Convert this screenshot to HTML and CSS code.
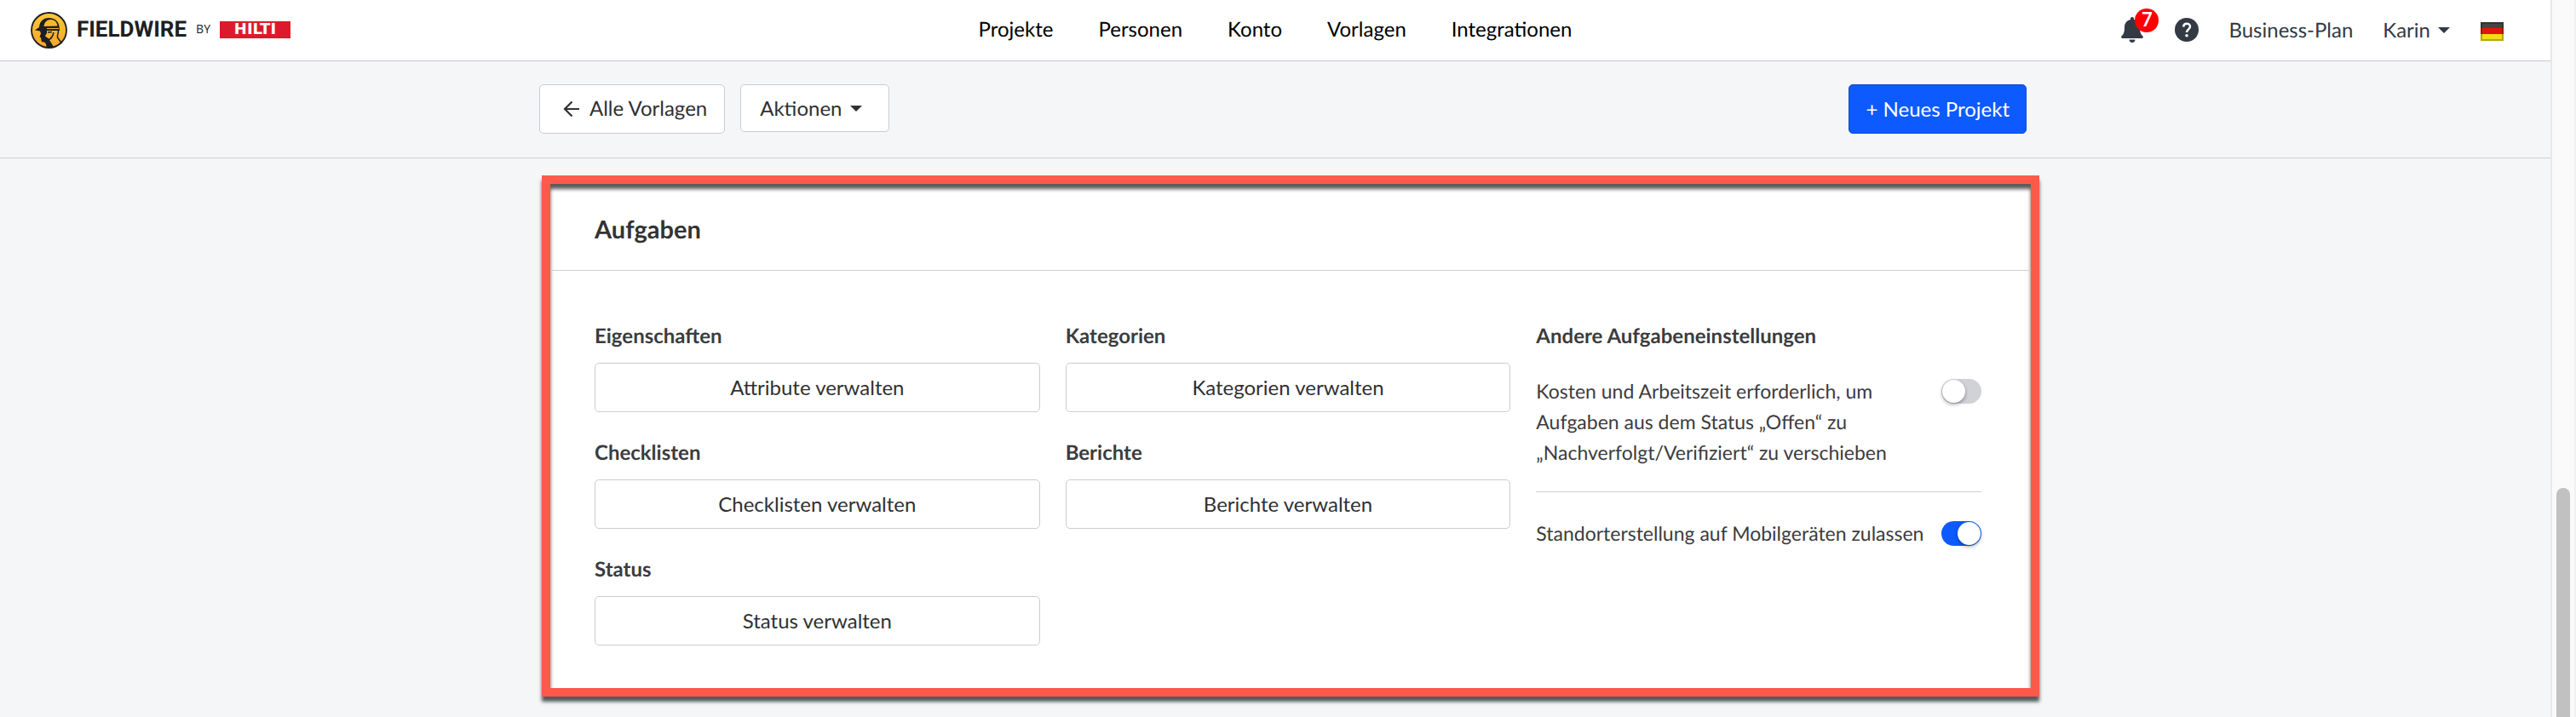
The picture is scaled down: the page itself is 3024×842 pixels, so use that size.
FILE: index.html
```html
<!DOCTYPE html>
<html lang="de">
<head>
<meta charset="utf-8">
<title>Fieldwire – Vorlagen</title>
<link rel="stylesheet" href="styles.css">
</head>
<body>
<div class="page">
  <header class="topbar">
    <a class="brand" href="#">
      <svg class="brand-mark" viewBox="0 0 43 43" aria-hidden="true">
        <defs><linearGradient id="amber" x1="0" y1="0" x2="0" y2="1"><stop offset="0" stop-color="#fdc835"/><stop offset="1" stop-color="#f9a52b"/></linearGradient></defs>
        <circle cx="21.500" cy="21.500" r="20.500" fill="url(#amber)" stroke="#1d1f23" stroke-width="1.800"/>
        <path fill="#1d1f23" d="M5 21.500 10 18C10.500 11 15 7 21 7c7 0 12 4 12.500 10L34 22H19v3l-2 3c1 2 4 2 5 5l5 8c-3 1-6 1.300-9 .800 1-3 0-5-2.500-6.500-2 .500-3-.500-3-2l-.500-3-1.500-1 1.500-4-1-2.800z"/>
        <path fill="#fbb62f" d="M15.500 17c.5-5 3.500-8 8-8s7.500 3 8 7.500z"/>
        <path stroke="#fbb62f" stroke-width="1" d="M19 19.500h14"/>
        <path fill="none" stroke="#1d1f23" stroke-width="1.500" d="M32.500 21.500c0 4-1.500 6-1 8.500l5 7M20 24l5-.500M20 33c4-1 6-4 7-9"/>
      </svg>
      <span class="brand-name">FIELDWIRE</span>
      <span class="brand-by">BY</span>
      <span class="brand-owner">HILTI</span>
    </a>
    <nav class="nav">
      <a href="#">Projekte</a>
      <a href="#">Personen</a>
      <a href="#">Konto</a>
      <a href="#">Vorlagen</a>
      <a href="#">Integrationen</a>
    </nav>
    <div class="account">
      <button class="icon-button bell" type="button" aria-label="Benachrichtigungen">
        <svg width="26" height="30" viewBox="0 0 26 30" aria-hidden="true"><path fill="#343a44" d="M13 0c1.200 0 2 .8 2 2v1c4.500 1 7 4.500 7 9 0 6 1 8 3.500 10.500.8.900.4 2.500-1 2.500h-23c-1.400 0-1.800-1.600-1-2.500C3 20 4 18 4 12c0-4.500 2.500-8 7-9V2c0-1.200.8-2 2-2zM9.500 26.500h7c0 2-1.500 3.500-3.500 3.500s-3.500-1.500-3.500-3.500z"/></svg>
        <span class="badge">7</span>
      </button>
      <button class="icon-button help" type="button" aria-label="Hilfe">
        <svg width="28" height="28" viewBox="0 0 28 28" aria-hidden="true"><circle cx="14" cy="14" r="14" fill="#343a44"/><path fill="none" stroke="#fff" stroke-width="2.500" d="M10 10.500c.3-2.300 1.800-3.700 4-3.700s4 1.400 4 3.500c0 3-4 3.200-4 6.700"/><circle cx="14" cy="20.700" r="1.800" fill="#fff"/></svg>
      </button>
      <span class="plan">Business-Plan</span>
      <button class="user" type="button">Karin <span class="caret"></span></button>
      <button class="icon-button language" type="button" aria-label="Deutsch">
        <svg width="27" height="22" viewBox="0 0 27 22" aria-hidden="true"><path fill="#444" d="M0 0h27v8H0z"/><path fill="#e2140f" d="M0 7h27v7H0z"/><path fill="#f5dc14" d="M0 14h27v8H0z"/><path fill="none" stroke="#000" stroke-opacity=".25" stroke-width="2" d="M1 1h25v20H1z"/></svg>
      </button>
    </div>
  </header>

  <div class="toolbar">
    <a class="button button-back" href="#">
      <svg width="20" height="20" viewBox="0 0 20 20" aria-hidden="true"><path fill="none" stroke="#2f3133" stroke-width="2.200" d="M19 10H2M10.500 1.500 2 10l8.500 8.500"/></svg>
      Alle Vorlagen
    </a>
    <button class="button button-menu" type="button">Aktionen <span class="caret"></span></button>
    <button class="button button-primary" type="button">+ Neues Projekt</button>
  </div>

  <main class="content">
    <section class="card">
      <h1 class="card-title">Aufgaben</h1>
      <div class="columns">
        <div class="column">
          <div class="group"><h2 class="label">Eigenschaften</h2><button class="button" type="button">Attribute verwalten</button></div>
          <div class="group"><h2 class="label">Checklisten</h2><button class="button" type="button">Checklisten verwalten</button></div>
          <div class="group"><h2 class="label">Status</h2><button class="button" type="button">Status verwalten</button></div>
        </div>
        <div class="column">
          <div class="group"><h2 class="label">Kategorien</h2><button class="button" type="button">Kategorien verwalten</button></div>
          <div class="group"><h2 class="label">Berichte</h2><button class="button" type="button">Berichte verwalten</button></div>
        </div>
        <div class="settings">
          <h2 class="label">Andere Aufgabeneinstellungen</h2>
          <div class="setting">
            <label for="cost">Kosten und Arbeitszeit erforderlich, um Aufgaben aus dem Status „Offen“ zu „Nachverfolgt/Verifiziert“ zu verschieben</label>
            <input class="switch" id="cost" type="checkbox">
          </div>
          <div class="setting">
            <label for="location">Standorterstellung auf Mobilgeräten zulassen</label>
            <input class="switch" id="location" type="checkbox" checked>
          </div>
        </div>
      </div>
    </section>
  </main>
</div>
<div class="scroll-track"><div class="scroll-thumb"></div></div>
</body>
</html>
```
FILE: styles.css
```css
* {
  box-sizing: border-box;
}

body {
  margin: 0;
  display: flex;
  min-height: 100vh;
  background: #f4f6f8;
  color: #3b3c3e;
  font: 24px/36px Lato, "Liberation Sans", sans-serif;
  text-rendering: geometricPrecision;
}

a {
  color: inherit;
  text-decoration: none;
}

button {
  font: inherit;
  color: inherit;
  cursor: pointer;
}

.page {
  flex: 1;
  min-width: 0;
}

/* Top bar */
.topbar {
  display: grid;
  grid-template-columns: 1fr auto 1fr;
  align-items: center;
  height: 72px;
  padding: 0 36px 1px;
  background: #fff;
  border-bottom: 1px solid #c9cacc;
}

.brand {
  display: flex;
  align-items: center;
  color: #1d1f23;
}

.brand-mark {
  width: 43px;
  height: 43px;
}

.brand-name {
  margin-left: 11px;
  font: 700 26px/36px Roboto, sans-serif;
}

.brand-by {
  margin-left: 11px;
  font: 14px/36px "Open Sans", sans-serif;
}

.brand-owner {
  width: 83px;
  margin-left: 11px;
  background: #dc1a2b;
  color: #fff;
  font: 700 18px/20px "DejaVu Sans", sans-serif;
  text-align: center;
}

.nav {
  display: flex;
  gap: 53px;
  color: #000;
}

.account {
  display: flex;
  align-items: center;
  justify-content: flex-end;
  padding-right: 19px;
  color: #343a44;
}

.icon-button {
  position: relative;
  display: flex;
  padding: 0;
  background: none;
  border: 0;
}

.badge {
  position: absolute;
  left: 16px;
  top: -10px;
  width: 28px;
  height: 28px;
  border-radius: 50%;
  background: #f00;
  color: #fff;
  font-size: 22px;
  font-weight: 700;
  line-height: 26px;
}

.help {
  margin-left: 37px;
}

.plan {
  margin-left: 35px;
  padding-top: 2px;
}

.user {
  display: flex;
  align-items: center;
  gap: 9px;
  margin-left: 35px;
  padding: 0;
  background: none;
  border: 0;
}

.language {
  margin-left: 36px;
  padding-top: 3px;
}

.caret {
  border: 7px solid transparent;
  border-top-color: currentColor;
  border-bottom: 0;
}

/* Template toolbar */
.toolbar {
  display: flex;
  align-items: flex-start;
  gap: 18px;
  padding: 27px 615px 28px 633px;
  border-bottom: 1px solid #cfd0d3;
}

.button {
  display: flex;
  align-items: center;
  justify-content: center;
  height: 58px;
  padding: 0 19px;
  background: #fff;
  border: 1px solid #cbccd0;
  border-radius: 5px;
  color: #2f3133;
}

.button-back {
  gap: 11px;
  padding: 0 20px 0 27px;
}

.button-menu {
  gap: 10px;
  height: 56px;
  padding: 0 31px 0 22px;
}

.button-primary {
  margin-left: auto;
  background: #0d5bff;
  border-color: #0b4bd2;
  color: #fff;
}

/* Task settings card */
.content {
  padding: 20px 600px 24px 636px;
}

.card {
  background: #fff;
  border: 10px solid #ff594c;
  box-shadow: 0 6px 4px rgba(0, 0, 0, 0.65), inset 0 6px 4px rgba(0, 0, 0, 0.65);
}

.card-title {
  margin: 0;
  padding: 36px 52px 29px;
  border-bottom: 1px solid #cfd0d3;
  color: #333;
  font-size: 29px;
  line-height: 36px;
}

.columns {
  display: grid;
  grid-template-columns: repeat(3, minmax(0, 1fr));
  gap: 30px;
  padding: 59px 58px 50px 52px;
}

.column {
  display: flex;
  flex-direction: column;
  gap: 30px;
}

.group {
  display: grid;
  gap: 13px;
}

.label {
  margin: 0;
  font-size: 24px;
  line-height: 36px;
}

.setting {
  display: flex;
  align-items: flex-start;
  gap: 8px;
  padding: 28px 0;
}

.setting + .setting {
  padding-top: 30px;
  border-top: 1px solid #cfd0d3;
}

.setting label {
  flex: 1;
  font-size: 23px;
}

.switch {
  appearance: none;
  flex: none;
  width: 47px;
  height: 29px;
  margin: 4px 0 0;
  padding: 1px;
  border-radius: 15px;
  background: #d1d1d8;
}

.switch::before {
  content: "";
  display: block;
  width: 27px;
  height: 27px;
  border-radius: 50%;
  background: #fff;
  box-shadow: 0 2px 4px rgba(0, 0, 0, 0.35);
}

.switch:checked {
  background: #0d5bff;
}

.switch:checked::before {
  margin-left: auto;
}

/* Scroll bar */
.scroll-track {
  display: flex;
  flex-direction: column;
  justify-content: flex-end;
  align-items: center;
  width: 30px;
  background: #fafafa;
  border-left: 2px solid #e8e8e8;
  border-right: 2px solid #f0f0f0;
}

.scroll-thumb {
  width: 16px;
  height: 32%;
  border-radius: 8px 8px 0 0;
  background: #c1c1c1;
}
```
